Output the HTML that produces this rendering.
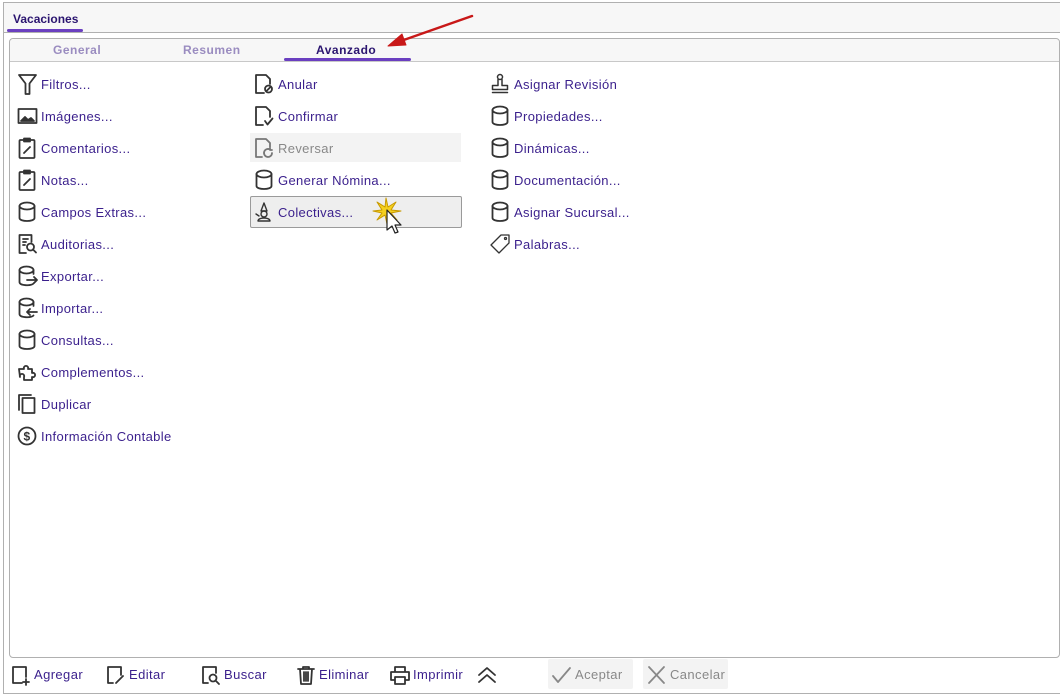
<!DOCTYPE html>
<html><head><meta charset="utf-8"><style>
body{margin:0;width:1062px;height:694px;background:#fff;position:relative;overflow:hidden;font-family:"Liberation Sans","DejaVu Sans",sans-serif;}
.outer{position:absolute;left:3px;top:2px;width:1056px;height:690px;border:1px solid #b0b0b0;border-right:none;background:#fff;}
.hdr{position:absolute;left:0;top:0;width:1056px;height:29px;background:#f7f7f7;border-bottom:1px solid #b0b0b0;}
.vt{position:absolute;left:9px;top:9px;font-size:12px;font-weight:bold;color:#2b1570;}
.vu{position:absolute;left:3px;top:26px;width:76px;height:3px;background:#6a3fc0;border-radius:2px;}
.panel{position:absolute;left:9px;top:38px;width:1049px;height:618px;border:1px solid #b0b0b0;border-radius:4px;background:#fff;}
.tabs{position:absolute;left:0;top:0;width:1049px;height:22px;background:#f7f7f7;border-bottom:1px solid #c8c8c8;border-radius:4px 4px 0 0;}
.tab{position:absolute;top:4px;font-size:12px;font-weight:bold;color:#9a8cc0;letter-spacing:.5px}
.it{position:absolute;height:22px;line-height:22px;font-size:13px;color:#3a1f8c;white-space:nowrap;letter-spacing:.35px}
.it svg{position:absolute;left:0;top:0}
.it span{position:absolute;left:24px;top:1px}
svg{fill:none;stroke:#333;stroke-width:1.8;stroke-linejoin:round;stroke-linecap:round}
.b{position:absolute;top:662px;height:24px;line-height:24px;font-size:13px;color:#3a1f8c;white-space:nowrap;letter-spacing:.4px}
.b svg{position:absolute;left:0;top:2px}
.b span{position:absolute;left:24px;top:1px}
</style></head><body>
<div class="outer">
 <div class="hdr"><div class="vt">Vacaciones</div><div class="vu"></div></div>
</div>
<div class="panel">
 <div class="tabs">
  <div class="tab" style="left:43px">General</div>
  <div class="tab" style="left:173px">Resumen</div>
  <div class="tab" style="left:306px;color:#2b1570">Avanzado</div>
  <div style="position:absolute;left:274px;top:19px;width:127px;height:3px;background:#6a3fc0;border-radius:2px"></div>
 </div>
</div>
<svg style="position:absolute;left:380px;top:12px" width="100" height="40" viewBox="0 0 100 40"><line x1="92" y1="4" x2="18" y2="30" style="stroke:#c81818;stroke-width:2.5"/><polygon points="8,34 22,22 26,33" style="fill:#c81818;stroke:#c81818;stroke-width:1"/></svg>

<div class="it" style="left:17px;top:73px"><svg width="22" height="22"><path d="M2 2h17l-6.5 8.5V21h-4V10.5z"/></svg><span>Filtros...</span></div>
<div class="it" style="left:17px;top:105px"><svg width="22" height="22"><rect x="1.5" y="4" width="18" height="14"/><path d="M4 16l4-4 3 3 3-2 3 3z" style="fill:#333"/></svg><span>Imágenes...</span></div>
<div class="it" style="left:17px;top:137px"><svg width="22" height="22"><rect x="2.5" y="3" width="15" height="18" rx="1"/><rect x="7" y="1.5" width="6" height="3" style="fill:#333"/><path d="M7 16l6-6"/></svg><span>Comentarios...</span></div>
<div class="it" style="left:17px;top:169px"><svg width="22" height="22"><rect x="2.5" y="3" width="15" height="18" rx="1"/><rect x="7" y="1.5" width="6" height="3" style="fill:#333"/><path d="M7 16l6-6"/></svg><span>Notas...</span></div>
<div class="it" style="left:17px;top:201px"><svg width="22" height="22"><path d="M2.5 5v12c0 4 15 4 15 0V5"/><ellipse cx="10" cy="5" rx="7.5" ry="3.5"/></svg><span>Campos Extras...</span></div>
<div class="it" style="left:17px;top:233px"><svg width="22" height="22"><path d="M9 20H2.5V2h12v7"/><path d="M6 6h5M6 9h3M6 12h2"/><circle cx="13.5" cy="14" r="3.5"/><path d="M16 16.5L19 19.5"/></svg><span>Auditorias...</span></div>
<div class="it" style="left:17px;top:265px"><svg width="22" height="22"><path d="M2.5 5v12c0 4 12 4 14 1.5M16.5 9V5"/><ellipse cx="9.5" cy="5" rx="7" ry="3.5"/><path d="M10 15h10M17 12l3 3-3 3"/></svg><span>Exportar...</span></div>
<div class="it" style="left:17px;top:297px"><svg width="22" height="22"><path d="M2.5 5v12c0 4 12 4 14 1.5M16.5 9V5"/><ellipse cx="9.5" cy="5" rx="7" ry="3.5"/><path d="M20 15H10M13 12l-3 3 3 3"/></svg><span>Importar...</span></div>
<div class="it" style="left:17px;top:329px"><svg width="22" height="22"><path d="M2.5 5v12c0 4 15 4 15 0V5"/><ellipse cx="10" cy="5" rx="7.5" ry="3.5"/></svg><span>Consultas...</span></div>
<div class="it" style="left:17px;top:361px"><svg width="22" height="22"><path d="M2 8h5a2.2 2.2 0 1 1 4 0h4v4a2.2 2.2 0 1 1 0 4v3H7v-3a2.2 2.2 0 1 0-4 0z"/></svg><span>Complementos...</span></div>
<div class="it" style="left:17px;top:393px"><svg width="22" height="22"><path d="M2 17V2h12"/><rect x="5.5" y="5" width="12" height="15"/></svg><span>Duplicar</span></div>
<div class="it" style="left:17px;top:425px"><svg width="22" height="22"><circle cx="10" cy="11" r="8.5"/><text x="10" y="15.5" text-anchor="middle" style="font:bold 12px 'Liberation Sans';fill:#333;stroke:none">$</text></svg><span>Información Contable</span></div>

<div class="it" style="left:254px;top:73px"><svg width="22" height="22"><path d="M10 20H2V2h10l4 4v5"/><circle cx="14.5" cy="16" r="3.5"/><path d="M12.5 18l4-4"/></svg><span>Anular</span></div>
<div class="it" style="left:254px;top:105px"><svg width="22" height="22"><path d="M9 20H2V2h10l4 4v6"/><path d="M11 16l2.5 3.5 5-6"/></svg><span>Confirmar</span></div>
<div style="position:absolute;left:250px;top:133px;width:211px;height:29px;background:#f3f3f3"></div>
<div class="it" style="left:254px;top:137px;color:#888"><svg width="22" height="22" style="stroke:#777"><path d="M8 20H2V2h10l4 4v4"/><path d="M18 16a4 4 0 1 1-2-3.5M16 11v2h2"/></svg><span>Reversar</span></div>
<div class="it" style="left:254px;top:169px"><svg width="22" height="22"><path d="M2.5 5v12c0 4 15 4 15 0V5"/><ellipse cx="10" cy="5" rx="7.5" ry="3.5"/></svg><span>Generar Nómina...</span></div>
<div style="position:absolute;left:250px;top:196px;width:210px;height:30px;background:#eeeeee;border:1px solid #9a9a9a;border-radius:2px"></div>
<div class="it" style="left:254px;top:201px"><svg width="22" height="22" style="stroke-width:1.4"><path d="M7 10l3-8 3 8z"/><circle cx="10" cy="13" r="3"/><path d="M4 20c0-4 12-4 12 0z"/><path d="M2 13l3 2"/></svg><span>Colectivas...</span></div>
<svg style="position:absolute;left:370px;top:196px;fill:none" width="40" height="44" viewBox="0 0 40 44"><path d="M16 2l2 9 8-5-5 8 10 1-10 2 6 7-8-5-2 9-2-9-8 5 5-7-9-2 9-1-5-8 8 5z" style="fill:#f5d020;stroke:#c89a00;stroke-width:1"/><path d="M17 14v20l5-4 3 7 3-1-3-7 6 0z" style="fill:#fff;stroke:#222;stroke-width:1.2"/></svg>

<div class="it" style="left:490px;top:73px"><svg width="22" height="22" style="stroke-width:1.5"><circle cx="10" cy="4" r="2.5"/><path d="M8 6.5v6H2.5v4h15v-4H12v-6M2.5 19.5h15"/></svg><span>Asignar Revisión</span></div>
<div class="it" style="left:490px;top:105px"><svg width="22" height="22"><path d="M2.5 5v12c0 4 15 4 15 0V5"/><ellipse cx="10" cy="5" rx="7.5" ry="3.5"/></svg><span>Propiedades...</span></div>
<div class="it" style="left:490px;top:137px"><svg width="22" height="22"><path d="M2.5 5v12c0 4 15 4 15 0V5"/><ellipse cx="10" cy="5" rx="7.5" ry="3.5"/></svg><span>Dinámicas...</span></div>
<div class="it" style="left:490px;top:169px"><svg width="22" height="22"><path d="M2.5 5v12c0 4 15 4 15 0V5"/><ellipse cx="10" cy="5" rx="7.5" ry="3.5"/></svg><span>Documentación...</span></div>
<div class="it" style="left:490px;top:201px"><svg width="22" height="22"><path d="M2.5 5v12c0 4 15 4 15 0V5"/><ellipse cx="10" cy="5" rx="7.5" ry="3.5"/></svg><span>Asignar Sucursal...</span></div>
<div class="it" style="left:490px;top:233px"><svg width="22" height="22" style="stroke-width:1.3"><path d="M11 2h8v8l-10 10-8-8z"/><circle cx="15.5" cy="5.5" r="1"/></svg><span>Palabras...</span></div>

<div class="b" style="left:10px"><svg width="22" height="22"><path d="M12 19H3V3h13v10"/><path d="M16 15v6M13 18h6"/></svg><span>Agregar</span></div>
<div class="b" style="left:105px"><svg width="22" height="22"><path d="M8 19H3V3h13v8"/><path d="M11 19l7-7"/></svg><span>Editar</span></div>
<div class="b" style="left:200px"><svg width="22" height="22"><path d="M8 19H3V3h13v6"/><circle cx="13" cy="14" r="3.5"/><path d="M15.5 16.5L19 20"/></svg><span>Buscar</span></div>
<div class="b" style="left:295px"><svg width="22" height="22"><path d="M3 5h16M8 5V3h6v2M5 5l1 15h10l1-15M9 8v9M11 8v9M13 8v9"/></svg><span>Eliminar</span></div>
<div class="b" style="left:389px"><svg width="22" height="22"><path d="M6 7V3h10v4M5 16H2V8h18v8h-3M6 13h10v7H6z"/></svg><span>Imprimir</span></div>
<svg style="position:absolute;left:476px;top:665px" width="22" height="20"><path d="M3 10l8-7 8 7M3 17l8-7 8 7"/></svg>
<div style="position:absolute;left:548px;top:659px;width:85px;height:30px;background:#f3f3f3;border-radius:2px"></div>
<div class="b" style="left:551px;color:#888"><svg width="22" height="22" style="stroke:#888"><path d="M2 12l5 6L19 4"/></svg><span>Aceptar</span></div>
<div style="position:absolute;left:643px;top:659px;width:85px;height:30px;background:#f3f3f3;border-radius:2px"></div>
<div class="b" style="left:646px;color:#888"><svg width="22" height="22" style="stroke:#888"><path d="M3 3l15 16M18 3L3 19"/></svg><span>Cancelar</span></div>
</body></html>
